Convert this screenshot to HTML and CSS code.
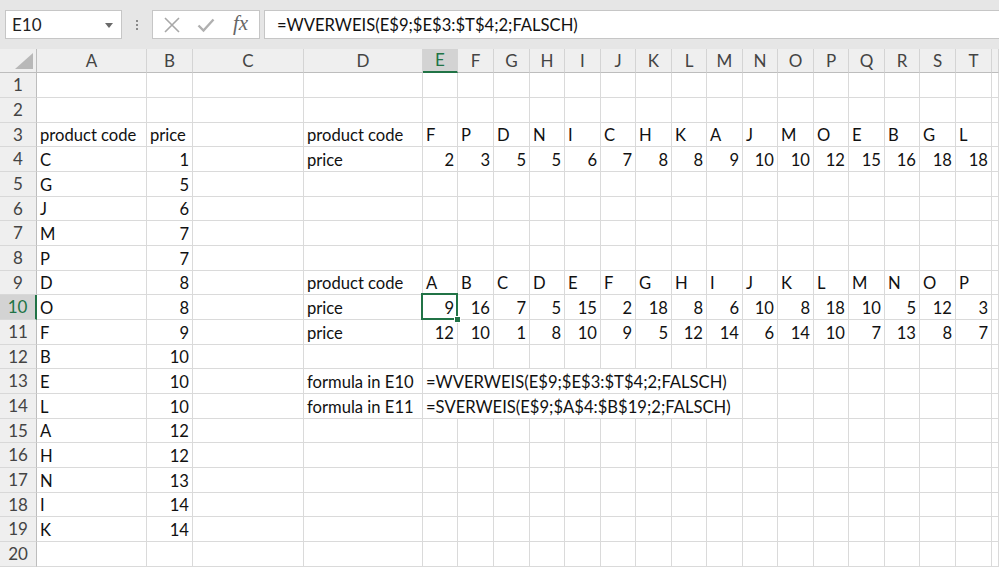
FILE: index.html
```html
<!DOCTYPE html>
<html>
<head>
<meta charset="utf-8">
<link rel="stylesheet" href="styles.css">
</head>
<body>
<div class="app">
  <div class="fbar">
    <div class="namebox"><span>E10</span><svg class="dd" width="8" height="5" viewBox="0 0 8 5"><path d="M0 0h8L4 5z" fill="#6a6a6a"/></svg></div>
    <div class="dots"><i></i><i></i><i></i></div>
    <div class="btns">
      <svg width="18" height="16" viewBox="0 0 18 16"><path d="M2 1L16 15M16 1L2 15" stroke="#a8a8a8" stroke-width="1.6" fill="none"/></svg>
      <svg width="18" height="16" viewBox="0 0 18 16"><path d="M1.5 8.5L6.5 13.5L16.5 2.5" stroke="#b0b0b0" stroke-width="2.4" fill="none"/></svg>
      <span class="fx">fx</span>
    </div>
    <div class="finput">=WVERWEIS(E$9;$E$3:$T$4;2;FALSCH)</div>
  </div>
  <div class="sheet">
    <div class="row hdr"><span class="corner"><svg width="18" height="16" viewBox="0 0 18 16"><path d="M18 0V16H0z" fill="#b8b8b8"/></svg></span><span>A</span><span>B</span><span>C</span><span>D</span><span class="sel">E</span><span>F</span><span>G</span><span>H</span><span>I</span><span>J</span><span>K</span><span>L</span><span>M</span><span>N</span><span>O</span><span>P</span><span>Q</span><span>R</span><span>S</span><span>T</span><span></span></div>
    <div class="row"><span class="rh">1</span><span></span><span></span><span></span><span></span><span></span><span></span><span></span><span></span><span></span><span></span><span></span><span></span><span></span><span></span><span></span><span></span><span></span><span></span><span></span><span></span><span></span></div>
    <div class="row"><span class="rh">2</span><span></span><span></span><span></span><span></span><span></span><span></span><span></span><span></span><span></span><span></span><span></span><span></span><span></span><span></span><span></span><span></span><span></span><span></span><span></span><span></span><span></span></div>
    <div class="row"><span class="rh">3</span><span>product code</span><span>price</span><span></span><span>product code</span><span>F</span><span>P</span><span>D</span><span>N</span><span>I</span><span>C</span><span>H</span><span>K</span><span>A</span><span>J</span><span>M</span><span>O</span><span>E</span><span>B</span><span>G</span><span>L</span><span></span></div>
    <div class="row"><span class="rh">4</span><span>C</span><span class="n">1</span><span></span><span>price</span><span class="n">2</span><span class="n">3</span><span class="n">5</span><span class="n">5</span><span class="n">6</span><span class="n">7</span><span class="n">8</span><span class="n">8</span><span class="n">9</span><span class="n">10</span><span class="n">10</span><span class="n">12</span><span class="n">15</span><span class="n">16</span><span class="n">18</span><span class="n">18</span><span></span></div>
    <div class="row"><span class="rh">5</span><span>G</span><span class="n">5</span><span></span><span></span><span></span><span></span><span></span><span></span><span></span><span></span><span></span><span></span><span></span><span></span><span></span><span></span><span></span><span></span><span></span><span></span><span></span></div>
    <div class="row"><span class="rh">6</span><span>J</span><span class="n">6</span><span></span><span></span><span></span><span></span><span></span><span></span><span></span><span></span><span></span><span></span><span></span><span></span><span></span><span></span><span></span><span></span><span></span><span></span><span></span></div>
    <div class="row"><span class="rh">7</span><span>M</span><span class="n">7</span><span></span><span></span><span></span><span></span><span></span><span></span><span></span><span></span><span></span><span></span><span></span><span></span><span></span><span></span><span></span><span></span><span></span><span></span><span></span></div>
    <div class="row"><span class="rh">8</span><span>P</span><span class="n">7</span><span></span><span></span><span></span><span></span><span></span><span></span><span></span><span></span><span></span><span></span><span></span><span></span><span></span><span></span><span></span><span></span><span></span><span></span><span></span></div>
    <div class="row"><span class="rh">9</span><span>D</span><span class="n">8</span><span></span><span>product code</span><span>A</span><span>B</span><span>C</span><span>D</span><span>E</span><span>F</span><span>G</span><span>H</span><span>I</span><span>J</span><span>K</span><span>L</span><span>M</span><span>N</span><span>O</span><span>P</span><span></span></div>
    <div class="row"><span class="rh rsel">10</span><span>O</span><span class="n">8</span><span></span><span>price</span><span class="n active">9</span><span class="n">16</span><span class="n">7</span><span class="n">5</span><span class="n">15</span><span class="n">2</span><span class="n">18</span><span class="n">8</span><span class="n">6</span><span class="n">10</span><span class="n">8</span><span class="n">18</span><span class="n">10</span><span class="n">5</span><span class="n">12</span><span class="n">3</span><span></span></div>
    <div class="row"><span class="rh">11</span><span>F</span><span class="n">9</span><span></span><span>price</span><span class="n">12</span><span class="n">10</span><span class="n">1</span><span class="n">8</span><span class="n">10</span><span class="n">9</span><span class="n">5</span><span class="n">12</span><span class="n">14</span><span class="n">6</span><span class="n">14</span><span class="n">10</span><span class="n">7</span><span class="n">13</span><span class="n">8</span><span class="n">7</span><span></span></div>
    <div class="row"><span class="rh">12</span><span>B</span><span class="n">10</span><span></span><span></span><span></span><span></span><span></span><span></span><span></span><span></span><span></span><span></span><span></span><span></span><span></span><span></span><span></span><span></span><span></span><span></span><span></span></div>
    <div class="row"><span class="rh">13</span><span>E</span><span class="n">10</span><span></span><span>formula in E10</span><span class="span9">=WVERWEIS(E$9;$E$3:$T$4;2;FALSCH)</span><span></span><span></span><span></span><span></span><span></span><span></span><span></span><span></span></div>
    <div class="row"><span class="rh">14</span><span>L</span><span class="n">10</span><span></span><span>formula in E11</span><span class="span9">=SVERWEIS(E$9;$A$4:$B$19;2;FALSCH)</span><span></span><span></span><span></span><span></span><span></span><span></span><span></span><span></span></div>
    <div class="row"><span class="rh">15</span><span>A</span><span class="n">12</span><span></span><span></span><span></span><span></span><span></span><span></span><span></span><span></span><span></span><span></span><span></span><span></span><span></span><span></span><span></span><span></span><span></span><span></span><span></span></div>
    <div class="row"><span class="rh">16</span><span>H</span><span class="n">12</span><span></span><span></span><span></span><span></span><span></span><span></span><span></span><span></span><span></span><span></span><span></span><span></span><span></span><span></span><span></span><span></span><span></span><span></span><span></span></div>
    <div class="row"><span class="rh">17</span><span>N</span><span class="n">13</span><span></span><span></span><span></span><span></span><span></span><span></span><span></span><span></span><span></span><span></span><span></span><span></span><span></span><span></span><span></span><span></span><span></span><span></span><span></span></div>
    <div class="row"><span class="rh">18</span><span>I</span><span class="n">14</span><span></span><span></span><span></span><span></span><span></span><span></span><span></span><span></span><span></span><span></span><span></span><span></span><span></span><span></span><span></span><span></span><span></span><span></span><span></span></div>
    <div class="row"><span class="rh">19</span><span>K</span><span class="n">14</span><span></span><span></span><span></span><span></span><span></span><span></span><span></span><span></span><span></span><span></span><span></span><span></span><span></span><span></span><span></span><span></span><span></span><span></span><span></span></div>
    <div class="row"><span class="rh">20</span><span></span><span></span><span></span><span></span><span></span><span></span><span></span><span></span><span></span><span></span><span></span><span></span><span></span><span></span><span></span><span></span><span></span><span></span><span></span><span></span><span></span></div>
  </div>
</div>
</body>
</html>
```
FILE: styles.css
```css
html, body {
  margin: 0;
  padding: 0;
  background: #ffffff;
  overflow: hidden;
}
.app {
  width: 999px;
  height: 569px;
  font-family: Lato, "Liberation Sans", sans-serif;
  font-size: 16.6px;
  color: #111;
  overflow: hidden;
}
.fbar {
  height: 49px;
  box-sizing: border-box;
  padding-top: 10px;
  background: #e6e6e6;
  display: flex;
  align-items: flex-start;
}
.namebox {
  margin-left: 5px;
  width: 117px;
  height: 29px;
  box-sizing: border-box;
  background: #fff;
  border: 1px solid #c6c6c6;
  display: flex;
  align-items: center;
  justify-content: space-between;
  padding: 0 8px 0 6px;
  font-size: 17px;
  color: #222;
}
.dd { margin-top: 1px; }
.dots {
  width: 30px;
  height: 29px;
  display: flex;
  flex-direction: column;
  align-items: center;
  justify-content: center;
  gap: 2px;
}
.dots i {
  display: block;
  width: 2px;
  height: 2px;
  background: #8a8a8a;
}
.btns {
  width: 108px;
  height: 29px;
  box-sizing: border-box;
  background: #fff;
  border: 1px solid #c6c6c6;
  display: flex;
  align-items: center;
  padding-left: 10px;
  gap: 16px;
}
.fx {
  font-family: "Liberation Serif", serif;
  font-style: italic;
  font-size: 21px;
  color: #666;
  margin-left: 2px;
  margin-top: -3px;
}
.finput {
  margin-left: 4px;
  flex: 1;
  height: 29px;
  box-sizing: border-box;
  background: #fff;
  border: 1px solid #c6c6c6;
  border-right: none;
  padding-left: 12px;
  display: flex;
  align-items: center;
  font-size: 16.6px;
  color: #111;
}
.sheet {
  background: #fff;
}
.row {
  display: grid;
  grid-template-columns: 37px 110px 46px 111px 119px 35px 36px 36px 35px 36px 35px 36px 35px 36px 35px 36px 35px 36px 35px 36px 36px 1fr;
  height: 25px;
}
.row:nth-child(3n+4) {
  height: 24px;
}
.row > span {
  box-sizing: border-box;
  border-right: 1px solid #dadada;
  border-bottom: 1px solid #dadada;
  padding: 0 3px 0 3px;
  display: flex;
  align-items: flex-end;
  white-space: nowrap;
  overflow: hidden;
  line-height: 22px;
}
.row > span.n {
  justify-content: flex-end;
}
.row > span.span9 {
  grid-column: span 9;
  overflow: visible;
}
.hdr {
  height: 24px;
  background: #efefef;
}
.hdr > span {
  justify-content: center;
  align-items: center;
  padding: 0;
  color: #444;
  border-right: 1px solid #d4d4d4;
  border-bottom: 1px solid #bdbdbd;
  font-size: 17px;
}
.hdr > span.corner {
  justify-content: flex-end;
  align-items: flex-end;
  padding: 0 3px 3px 0;
  border-right: 1px solid #bdbdbd;
}
.hdr > span.sel {
  background: #d3d3d3;
  color: #217346;
  border-bottom: 2px solid #217346;
}
.row > span.rh {
  background: #efefef;
  color: #444;
  font-size: 17px;
  justify-content: center;
  align-items: center;
  padding: 0;
  border-right: 1px solid #bdbdbd;
  border-bottom: 1px solid #d8d8d8;
}
.row > span.rsel {
  background: #d3d3d3;
  color: #217346;
  border-right: 2px solid #217346;
}
.row > span.active {
  position: relative;
  overflow: visible;
}
.active::after {
  content: "";
  position: absolute;
  left: -2px;
  top: -2px;
  right: -1px;
  bottom: -1px;
  border: 2px solid #217346;
}
.active::before {
  content: "";
  position: absolute;
  right: -4px;
  bottom: -4px;
  width: 5px;
  height: 5px;
  background: #217346;
  border: 1px solid #fff;
  z-index: 2;
}
```
